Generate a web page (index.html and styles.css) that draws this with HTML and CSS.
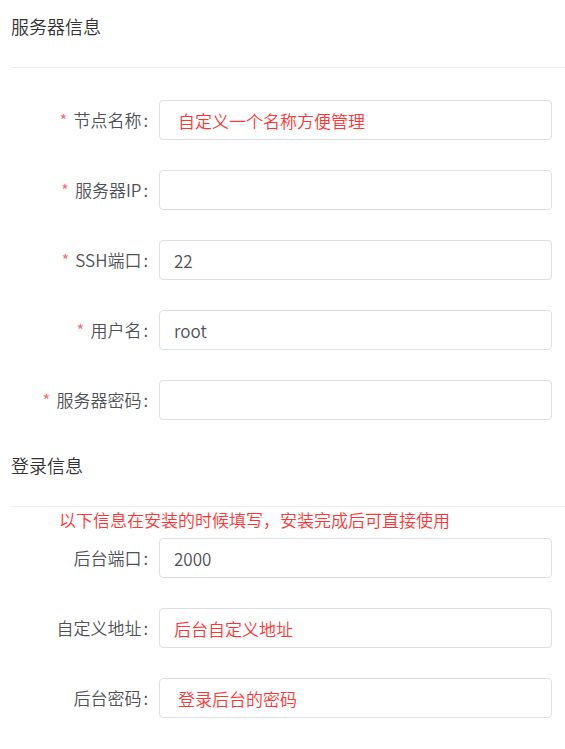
FILE: index.html
```html
<!DOCTYPE html>
<html lang="zh-CN">
<head>
    <meta charset="UTF-8">
    <meta name="viewport" content="width=device-width, initial-scale=1.0">
    <title>添加节点</title>
    <link rel="stylesheet" href="styles.css">
</head>
<body>
    <div class="page">
        <div class="section">
            <div class="section-title">服务器信息</div>
            <div class="form">
                <div class="form-item">
                    <label class="form-label"><span class="required">*</span>节点名称<span class="colon">:</span></label>
                    <input class="form-input indent" type="text" placeholder="自定义一个名称方便管理">
                </div>
                <div class="form-item">
                    <label class="form-label"><span class="required">*</span>服务器IP<span class="colon">:</span></label>
                    <input class="form-input" type="text">
                </div>
                <div class="form-item">
                    <label class="form-label"><span class="required">*</span>SSH端口<span class="colon">:</span></label>
                    <input class="form-input" type="text" value="22">
                </div>
                <div class="form-item">
                    <label class="form-label"><span class="required">*</span>用户名<span class="colon">:</span></label>
                    <input class="form-input" type="text" value="root">
                </div>
                <div class="form-item">
                    <label class="form-label"><span class="required">*</span>服务器密码<span class="colon">:</span></label>
                    <input class="form-input" type="password">
                </div>
            </div>
        </div>

        <div class="section">
            <div class="section-title">登录信息</div>
            <div class="tip">以下信息在安装的时候填写，安装完成后可直接使用</div>
            <div class="form">
                <div class="form-item">
                    <label class="form-label">后台端口<span class="colon">:</span></label>
                    <input class="form-input" type="text" value="2000">
                </div>
                <div class="form-item">
                    <label class="form-label">自定义地址<span class="colon">:</span></label>
                    <input class="form-input" type="text" placeholder="后台自定义地址">
                </div>
                <div class="form-item">
                    <label class="form-label">后台密码<span class="colon">:</span></label>
                    <input class="form-input indent" type="password" placeholder="登录后台的密码">
                </div>
            </div>
        </div>
    </div>
</body>
</html>
```

FILE: styles.css
```css
:root {
    --text-main: #333333;
    --text-regular: #4f5257;
    --border: #dcdfe6;
    --divider: #ebeef5;
    --danger: #f56c6c;
    --red: #ff3535;
}

body {
    margin: 0;
    padding: 0;
    background-color: #fff;
    font-family: "Noto Sans CJK SC", "Noto Sans", sans-serif;
    font-weight: 350;
    color: var(--text-regular);
}

.page {
    padding: 0 0 0 11px;
}

.section {
    padding-bottom: 19px;
}

.section-title {
    font-size: 18px;
    line-height: 28px;
    padding: 12px 0 27px;
    color: var(--text-main);
    border-bottom: 1px solid var(--divider);
}

.form {
    display: flex;
    flex-direction: column;
    gap: 30px;
    padding-right: 13px;
    margin-top: 32px;
}

.tip {
    font-size: 17px;
    line-height: 26px;
    color: var(--red);
    padding-left: 48px;
}

.tip + .form {
    margin-top: 5px;
}

.form-item {
    display: flex;
    align-items: center;
}

.form-label {
    width: 148px;
    flex-shrink: 0;
    box-sizing: border-box;
    padding-right: 11px;
    text-align: right;
    font-size: 17px;
    line-height: 40px;
    color: var(--text-regular);
}

.colon {
    margin-left: 2px;
}

.required {
    color: var(--danger);
    margin-right: 6px;
}

.form-input {
    flex: 1;
    min-width: 0;
    height: 40px;
    box-sizing: border-box;
    padding: 0 14px;
    border: 1px solid var(--border);
    border-radius: 4px;
    font-family: inherit;
    font-weight: 350;
    font-size: 17px;
    color: var(--text-regular);
    outline: none;
}

.form-input.indent {
    padding-left: 18px;
}

.form-input::placeholder {
    color: var(--red);
    opacity: 1;
}
```
